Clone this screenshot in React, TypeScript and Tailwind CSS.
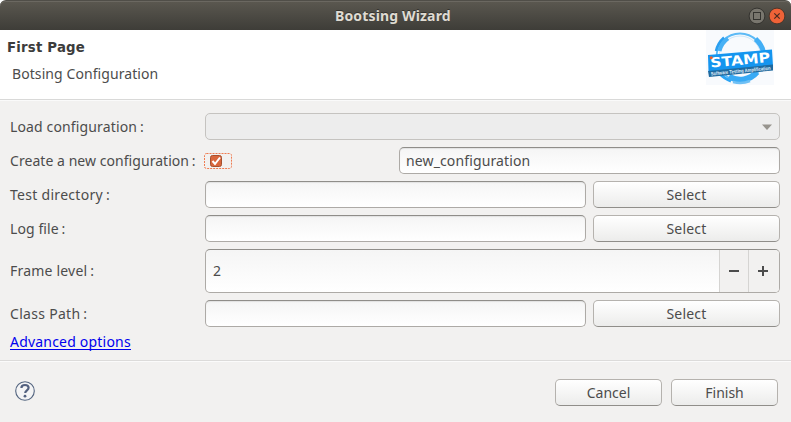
import React from "react";

const field =
  "h-[27px] rounded-[5px] border border-[#adaaa6] border-t-[#8f8d89] bg-linear-to-b from-[#f5f5f5] to-white shadow-[inset_0_1px_1px_rgba(0,0,0,0.08)]";
const button =
  "flex h-[27px] items-center justify-center rounded-[5px] border border-[#b5b2ae] border-b-[#908e8a] bg-linear-to-b from-white to-[#ececeb]";

function Label({ text, className }: { text: string; className: string }) {
  return (
    <div className="flex w-[195px] shrink-0 items-center">
      <span className={`whitespace-pre ${className}`}>
        {text}
        <span className="-ml-px"> :</span>
      </span>
    </div>
  );
}

function FileRow({ label, className }: { label: string; className: string }) {
  return (
    <div className="flex h-[27px]">
      <Label text={label} className={className} />
      <div className={`w-[381px] ${field}`} />
      <button className={`ml-[7px] w-[187px] ${button}`}>
        <span className="tracking-[0.2px]">Select</span>
      </button>
    </div>
  );
}

function StampLogo() {
  return (
    <svg className="h-[56px] w-[68px] overflow-visible" viewBox="0 0 68 56">
      <rect width="68" height="55" fill="#f8fafd" />
      <circle cx="34" cy="27" r="23.5" fill="none" stroke="#5dbaf6" strokeWidth="1.8" />
      <circle cx="34" cy="27" r="21" fill="none" stroke="#cfe7f8" strokeWidth="1" />
      <path d="M10 21A25 25 0 0 1 18 7.5" fill="none" stroke="#2a9ff0" strokeWidth="2.5" />
      <path d="M13.5 21A22 22 0 0 1 22 8.5" fill="none" stroke="#48b1f5" strokeWidth="4" />
      <path d="M49.5 9A24 24 0 0 1 57.5 22" fill="none" stroke="#42aef5" strokeWidth="5" />
      <path d="M14 44A27 27 0 0 0 25 51" fill="none" stroke="#2ba4f4" strokeWidth="3" />
      <path d="M23 46.5A22 22 0 0 0 51 42" fill="none" stroke="#38aaf5" strokeWidth="6" />
      <path d="M27 52A26 26 0 0 0 44 51" fill="none" stroke="#6fc0f5" strokeWidth="2.5" />
      <path d="M2 25L66 19.5L67 36L2.5 42Z" fill="#1595ef" />
      <path d="M2 41L67 34.5V40.5L3 47Z" fill="#1f6a9f" />
      <g transform="rotate(-5.5 34 33)">
        <text x="4.5" y="34.8" textLength="60" lengthAdjust="spacingAndGlyphs" fontFamily="DejaVu Sans, sans-serif" fontWeight="bold" fontSize="13.5" fill="#fff">STAMP</text>
        <text x="4" y="42.6" textLength="60" lengthAdjust="spacingAndGlyphs" fontFamily="Liberation Sans, sans-serif" fontWeight="bold" fontSize="5" fill="#e3f2fc">Software Testing Amplification</text>
      </g>
      <circle cx="5.2" cy="27.8" r="1.5" fill="#f15a29" />
    </svg>
  );
}

export default function App() {
  return (
    <div className="flex h-[422px] w-[791px] flex-col overflow-hidden bg-[#f2f1f0] font-['Noto_Sans',sans-serif] text-[14px] leading-[20px] text-[#4c4c4c]">
      <div className="bg-white">
        <header className="flex h-[30px] items-center rounded-t-[6px] border-t border-[#504e48] bg-linear-to-b from-[#5b5850] to-[#3e3d38] shadow-[inset_0_1px_0_#6b6861]">
          <span className="flex-1 pl-[335px] text-[14px] font-bold tracking-[0.15px] text-[#dfdbd2] [text-shadow:0_-1px_0_#33322e]">Bootsing Wizard</span>
          <svg className="mr-[5px] h-[18px] w-[38px]" viewBox="0 0 38 18">
            <circle cx="9" cy="9" r="7.9" fill="#79766e" stroke="#34332f" />
            <rect x="5.5" y="5.5" width="7" height="7" fill="none" stroke="#34332f" />
            <circle cx="29" cy="9" r="7.9" fill="#ef6237" stroke="#49362b" />
            <path d="M26.3 6.3l5.4 5.4m0-5.4l-5.4 5.4" stroke="#4a2b20" strokeWidth="1.2" />
          </svg>
        </header>
      </div>
      <section className="flex h-[69px] shrink-0 justify-between bg-white">
        <div className="pl-[7px] pt-[8px] whitespace-nowrap">
          <h1 className="font-['DejaVu_Sans',sans-serif] text-[13.3px] font-bold leading-[20px] tracking-[0.2px] text-[#3c3c3c]">First Page</h1>
          <p className="mt-[6px] pl-[5px] tracking-[0.08px]">Botsing Configuration</p>
        </div>
        <div className="mr-[17px]">
          <StampLogo />
        </div>
      </section>
      <div className="h-[2px] shrink-0 border-t border-[#d9d9d8] bg-[#fafafa]" />
      <main className="flex h-[259px] shrink-0 flex-col gap-[7px] pl-[10px] pt-[12px]">
        <div className="flex h-[27px]">
          <Label text="Load configuration" className="tracking-[0.14px]" />
          <div className="flex h-[27px] w-[575px] items-center justify-end rounded-[5px] border border-[#c5c3c0] bg-[#ededed] pr-[7px]">
            <svg className="h-[6px] w-[10px]" viewBox="0 0 10 6"><path d="M0 0.5H10L5 6Z" fill="#97948e" /></svg>
          </div>
        </div>
        <div className="flex h-[27px]">
          <Label text="Create a new configuration" className="tracking-[0.05px]" />
          <div className="-ml-px flex w-[195px] items-center">
            <svg className="h-[16px] w-[28px]" viewBox="0 0 28 16">
              <rect x="0.5" y="0.5" width="27" height="15" rx="2" fill="none" stroke="#ef7b50" strokeDasharray="2 1" />
              <rect x="6.5" y="2.5" width="11" height="11" rx="2" fill="#d9663c" stroke="#a5502f" />
              <path d="M8.5 8l2.5 3L16 4.5" fill="none" stroke="#fff" strokeWidth="2" />
            </svg>
          </div>
          <div className={`flex w-[381px] items-center pl-[6px] tracking-[0.13px] ${field}`}>new_configuration</div>
        </div>
        <FileRow label="Test directory" className="tracking-[0.29px]" />
        <FileRow label="Log file" className="tracking-[0.1px]" />
        <div className="flex h-[44px]">
          <Label text="Frame level" className="tracking-[0.2px]" />
          <div className="flex w-[575px] items-stretch overflow-hidden rounded-[5px] border border-[#adaaa6] border-t-[#8f8d89] bg-linear-to-b from-[#f5f5f5] to-white">
            <span className="flex flex-1 items-center pl-[7px]">2</span>
            <button className="flex w-[29px] items-center justify-center border-l border-[#d5d4d2] bg-[#f2f1f0]"><span className="h-[2px] w-[10px] bg-[#4c4c4c]" /></button>
            <button className="flex w-[31px] items-center border-l border-[#d5d4d2] bg-[#f2f1f0] pl-[9px]">
              <svg className="h-[10px] w-[10px]" viewBox="0 0 10 10"><path d="M0 5H10M5 0V10" stroke="#4c4c4c" strokeWidth="2" /></svg>
            </button>
          </div>
        </div>
        <FileRow label="Class Path" className="tracking-[0.3px]" />
        <a className="h-[16px] w-[121px] border-b border-[#0000ee] whitespace-nowrap leading-[16px] tracking-[0.2px] text-[#0000ee]">Advanced options</a>
      </main>
      <div className="h-[2px] shrink-0 border-t border-[#dcdbda] bg-[#fbfbfb]" />
      <footer className="flex flex-1 items-start pl-[15px] pr-[13px] pt-[17px]">
        <svg className="mt-[2px] h-[20px] w-[20px]" viewBox="0 0 20 20">
          <circle cx="10" cy="10" r="9.3" fill="#f4f4f5" stroke="#53647f" strokeWidth="1.1" />
          <path d="M6.4 7C6.4 4.8 8 4 10 4s3.6 1 3.6 2.8c0 2.4-3.4 2.6-3.4 5.2" fill="none" stroke="#53617f" strokeWidth="2.2" />
          <circle cx="10" cy="15.2" r="1.4" fill="#53617f" />
        </svg>
        <button className={`ml-auto w-[107px] ${button}`}><span>Cancel</span></button>
        <button className={`ml-[9px] w-[107px] ${button}`}><span>Finish</span></button>
      </footer>
    </div>
  );
}
